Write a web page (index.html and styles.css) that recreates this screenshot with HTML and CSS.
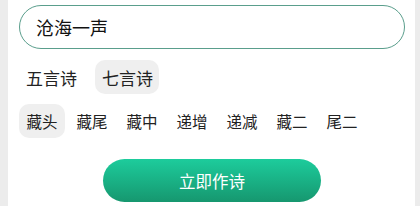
FILE: index.html
```html
<!DOCTYPE html>
<html lang="zh-CN">
<head>
    <meta charset="UTF-8">
    <meta name="viewport" content="width=device-width, initial-scale=1.0">
    <title>藏头诗</title>
    <link rel="stylesheet" href="styles.css">
</head>
<body>
    <div class="panel">
        <div class="input-box">沧海一声</div>
        <div class="row row-len">
            <span class="chip">五言诗</span>
            <span class="chip active">七言诗</span>
        </div>
        <div class="row row-type">
            <span class="chip active">藏头</span>
            <span class="chip">藏尾</span>
            <span class="chip">藏中</span>
            <span class="chip">递增</span>
            <span class="chip">递减</span>
            <span class="chip">藏二</span>
            <span class="chip">尾二</span>
        </div>
        <div class="actions">
            <button class="go-btn">立即作诗</button>
        </div>
    </div>
</body>
</html>
```

FILE: styles.css
```css
body {
    margin: 0;
    background: #ececec;
    font-family: "Noto Sans CJK SC", "Noto Sans", sans-serif;
    color: #222;
}
.panel {
    margin-left: 8px;
    width: 407px;
    height: 206px;
    background: #fff;
    padding: 5px 0 0 11px;
    box-sizing: border-box;
}
.input-box {
    width: 386px;
    height: 44px;
    box-sizing: border-box;
    border: 1.5px solid #5a9e8c;
    border-radius: 22px;
    padding-left: 16px;
    display: flex;
    align-items: center;
    font-size: 18px;
    color: #111;
}
.row {
    display: flex;
    align-items: center;
}
.row-len {
    margin-top: 11px;
    gap: 12px;
}
.row-len .chip {
    font-size: 17px;
    height: 34px;
    padding: 0 6px 0 7px;
}
.row-type {
    margin-top: 10px;
    gap: 4px;
}
.row-type .chip {
    font-size: 15.5px;
    height: 34px;
    padding: 0 7px;
    width: 46px;
    box-sizing: border-box;
    justify-content: center;
}
.chip {
    display: flex;
    align-items: center;
    border-radius: 10px;
    white-space: nowrap;
}
.chip.active {
    background: #efefef;
}
.actions {
    margin-top: 21px;
    padding-left: 84px;
}
.go-btn {
    width: 218px;
    height: 43px;
    border: none;
    border-radius: 22px;
    background: linear-gradient(to bottom, #1dcc9c, #16976f);
    color: #fff;
    font-family: inherit;
    font-size: 16.5px;
}
```
